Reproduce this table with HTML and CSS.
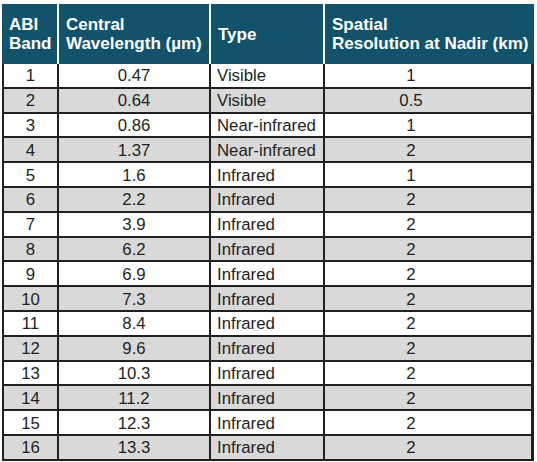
FILE: index.html
```html
<!DOCTYPE html>
<html>
<head>
<meta charset="utf-8">
<link rel="stylesheet" href="styles.css">
</head>
<body>
<table class="abi">
  <colgroup>
    <col class="c1"><col class="c2"><col class="c3"><col class="c4">
  </colgroup>
  <thead>
    <tr>
      <th>ABI<br>Band</th>
      <th>Central<br>Wavelength (µm)</th>
      <th>Type</th>
      <th>Spatial<br>Resolution at Nadir (km)</th>
    </tr>
  </thead>
  <tbody>
    <tr><td>1</td><td>0.47</td><td class="t">Visible</td><td class="r">1</td></tr>
    <tr class="g"><td>2</td><td>0.64</td><td class="t">Visible</td><td class="r">0.5</td></tr>
    <tr><td>3</td><td>0.86</td><td class="t">Near-infrared</td><td class="r">1</td></tr>
    <tr class="g"><td>4</td><td>1.37</td><td class="t">Near-infrared</td><td class="r">2</td></tr>
    <tr><td>5</td><td>1.6</td><td class="t">Infrared</td><td class="r">1</td></tr>
    <tr class="g"><td>6</td><td>2.2</td><td class="t">Infrared</td><td class="r">2</td></tr>
    <tr><td>7</td><td>3.9</td><td class="t">Infrared</td><td class="r">2</td></tr>
    <tr class="g"><td>8</td><td>6.2</td><td class="t">Infrared</td><td class="r">2</td></tr>
    <tr><td>9</td><td>6.9</td><td class="t">Infrared</td><td class="r">2</td></tr>
    <tr class="g"><td>10</td><td>7.3</td><td class="t">Infrared</td><td class="r">2</td></tr>
    <tr><td>11</td><td>8.4</td><td class="t">Infrared</td><td class="r">2</td></tr>
    <tr class="g"><td>12</td><td>9.6</td><td class="t">Infrared</td><td class="r">2</td></tr>
    <tr><td>13</td><td>10.3</td><td class="t">Infrared</td><td class="r">2</td></tr>
    <tr class="g"><td>14</td><td>11.2</td><td class="t">Infrared</td><td class="r">2</td></tr>
    <tr><td>15</td><td>12.3</td><td class="t">Infrared</td><td class="r">2</td></tr>
    <tr class="g"><td>16</td><td>13.3</td><td class="t">Infrared</td><td class="r">2</td></tr>
  </tbody>
</table>
</body>
</html>
```

FILE: styles.css
```css
html, body {
  margin: 0;
  padding: 0;
  background: #ffffff;
}
body {
  padding: 4px 0 0 2px;
  font-family: "Liberation Sans", Arial, sans-serif;
  color: #231f20;
}
.abi {
  border-collapse: separate;
  border-spacing: 0;
  table-layout: fixed;
  width: 532px;
}
.c1 { width: 55px; }
.c2 { width: 152px; }
.c3 { width: 114px; }
.c4 { width: 211px; }
.abi th {
  background: #12526b;
  color: #ffffff;
  font-weight: bold;
  font-size: 17px;
  line-height: 19px;
  text-align: left;
  vertical-align: middle;
  height: 60px;
  box-sizing: border-box;
  padding: 0 0 0 7px;
  white-space: nowrap;
}
.abi th + th {
  border-left: 2px solid #ffffff;
}
.abi td {
  font-size: 16.8px;
  line-height: 19px;
  text-align: center;
  height: 24.8px;
  box-sizing: border-box;
  padding: 1px 0 0 0;
  border-left: 2px solid #231f20;
  border-bottom: 2.5px solid #231f20;
  background: #ffffff;
  white-space: nowrap;
}
.abi td:last-child {
  border-right: 3px solid #231f20;
}
.abi td.t {
  text-align: left;
  padding-left: 6px;
}
.abi td.r {
  padding-right: 34px;
}
.abi tr.g td {
  background: #d9d9d9;
}
```
